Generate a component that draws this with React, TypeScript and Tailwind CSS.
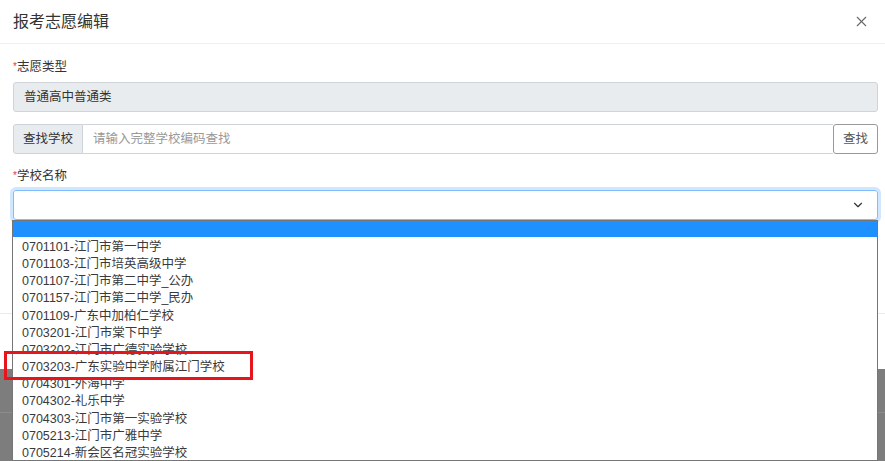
import React from 'react';
import { X, ChevronDown } from 'lucide-react';

const schools = [
  '0701101-江门市第一中学',
  '0701103-江门市培英高级中学',
  '0701107-江门市第二中学_公办',
  '0701157-江门市第二中学_民办',
  '0701109-广东中加柏仁学校',
  '0703201-江门市棠下中学',
  '0703202-江门市广德实验学校',
  '0703203-广东实验中学附属江门学校',
  '0704301-外海中学',
  '0704302-礼乐中学',
  '0704303-江门市第一实验学校',
  '0705213-江门市广雅中学',
  '0705214-新会区名冠实验学校',
];

function Label({ text }: { text: string }) {
  return (
    <div className="h-[18px] leading-[18px] text-[#333]">
      <span className="text-[10px] text-[#e33] align-top">*</span>
      {text}
    </div>
  );
}

export default function App() {
  return (
    <div
      className="relative h-[461px] w-[885px] overflow-hidden bg-[#7d7d7d] text-[12.5px]"
      style={{ fontFamily: '"Liberation Sans", "Noto Sans CJK SC", sans-serif' }}
    >
      {/* modal */}
      <div className="flex h-[369px] flex-col bg-white">
        <div className="flex h-[44px] shrink-0 items-center justify-between border-b border-[#eceeef] pl-[13px] pr-[15px]">
          <span className="text-[16px] text-[#333]">报考志愿编辑</span>
          <X size={17} strokeWidth={1.5} className="text-[#666]" />
        </div>

        <div className="flex-1 pl-[13px] pr-[7px] pt-[14px]">
          <Label text="志愿类型" />
          <div className="mt-[6px] flex h-[30px] items-center rounded-[3px] border border-[#ced4da] bg-[#e9ecef] px-[10px] text-[#333]">
            普通高中普通类
          </div>

          <div className="mt-[12px] flex h-[30px]">
            <div className="flex items-center rounded-l-[3px] border border-[#ced4da] bg-[#e9ecef] px-[9px] text-[#333]">
              查找学校
            </div>
            <div className="flex flex-1 items-center border-y border-[#ced4da] px-[10px] text-[#999]">
              请输入完整学校编码查找
            </div>
            <button className="w-[45px] rounded-[3px] border border-[#999] bg-white text-[#555]">
              查找
            </button>
          </div>

          <div className="mt-[13px]">
            <Label text="学校名称" />
          </div>
          <div className="mt-[5px] flex h-[30px] items-center justify-end rounded-[3px] border border-[#80bdff] pr-[12px] shadow-[0_0_0_3px_rgba(0,123,255,0.18)]">
            <ChevronDown size={14} strokeWidth={2} className="text-[#333]" />
          </div>
        </div>

        <div className="h-[56px] shrink-0 border-t border-[#e9ecef]" />
      </div>

      <div className="mt-[43px] h-px bg-[#8c8c8c]" />

      {/* open select list */}
      <div className="absolute bottom-0 left-[12px] top-[220px] w-[866px] border border-[#767676] bg-white">
        <div className="h-[16px] bg-[#1e90ff]" />
        <div className="pt-[2px] text-[#3a3a3a]">
          {schools.map((s) => (
            <div key={s} className="h-[17.17px] whitespace-nowrap pl-[9px] leading-[17.17px]">
              {s}
            </div>
          ))}
        </div>
      </div>

      {/* highlight */}
      <div className="absolute left-[4px] top-[351px] h-[29px] w-[249px] border-[3px] border-[#e8141b]" />
    </div>
  );
}
